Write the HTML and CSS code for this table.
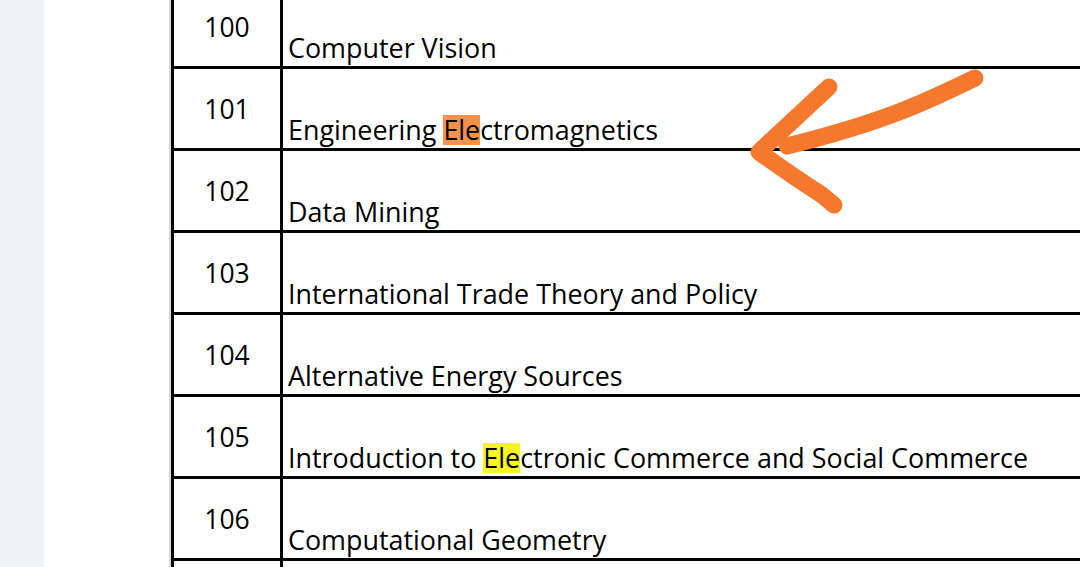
FILE: index.html
```html
<!DOCTYPE html>
<html>
<head>
<meta charset="utf-8">
<link rel="stylesheet" href="styles.css">
</head>
<body>
<div class="page">
  <div class="side"></div>
  <div class="sheet">
    <div class="table">
      <div class="row"><div class="num">100</div><div class="name">Computer Vision</div></div>
      <div class="row"><div class="num">101</div><div class="name">Engineering <span class="hl-orange">Ele</span>ctromagnetics</div></div>
      <div class="row"><div class="num">102</div><div class="name">Data Mining</div></div>
      <div class="row"><div class="num">103</div><div class="name">International Trade Theory and Policy</div></div>
      <div class="row"><div class="num">104</div><div class="name">Alternative Energy Sources</div></div>
      <div class="row"><div class="num">105</div><div class="name">Introduction to <span class="hl-yellow">Ele</span>ctronic Commerce and Social Commerce</div></div>
      <div class="row"><div class="num">106</div><div class="name">Computational Geometry</div></div>
      <div class="row"><div class="num"></div><div class="name"></div></div>
    </div>
  </div>
  <svg class="arrow" width="1080" height="567" viewBox="0 0 1080 567">
    <path d="M975 78 C 930 100, 885 122, 787 146" fill="none" stroke="#f5782c" stroke-width="17" stroke-linecap="round" stroke-linejoin="round"/>
    <path d="M829 87 L 759 152 Q 795 178 822 195 L 834 205" fill="none" stroke="#f5782c" stroke-width="17" stroke-linecap="round" stroke-linejoin="round"/>
  </svg>
</div>
</body>
</html>
```

FILE: styles.css
```css
html, body {
  margin: 0;
  padding: 0;
  width: 1080px;
  height: 567px;
  overflow: hidden;
  background: #ffffff;
}
.page {
  position: relative;
  display: flex;
  width: 1080px;
  height: 567px;
  overflow: hidden;
}
.side {
  width: 44px;
  flex: none;
  background: #f1f2f4;
}
.sheet {
  flex: 1;
  background: #ffffff;
  overflow: hidden;
}
.table {
  margin-left: 127px;
  margin-top: -13px;
  border-left: 3px solid #000;
  box-shadow: -3px 0 0 -1px #d8d8d8;
  width: 1000px;
  font-family: "Open Sans", "Noto Sans", sans-serif;
  font-variant-ligatures: none;
  color: #000;
}
.row {
  display: flex;
  height: 79px;
  border-bottom: 3px solid #000;
}
.num {
  width: 109px;
  flex: none;
  border-right: 3px solid #000;
  text-align: center;
  font-size: 26.5px;
  line-height: 30px;
  padding-top: 25px;
  box-sizing: border-box;
  height: 79px;
}
.name {
  flex: 1;
  display: flex;
  align-items: flex-end;
  padding-left: 5px;
  padding-bottom: 3px;
  font-size: 26.9px;
  line-height: 30px;
  white-space: pre;
}
.hl-orange {
  background: #f4924a;
}
.hl-yellow {
  background: #f6f51f;
}
.arrow {
  position: absolute;
  left: 0;
  top: 0;
  pointer-events: none;
}
```
